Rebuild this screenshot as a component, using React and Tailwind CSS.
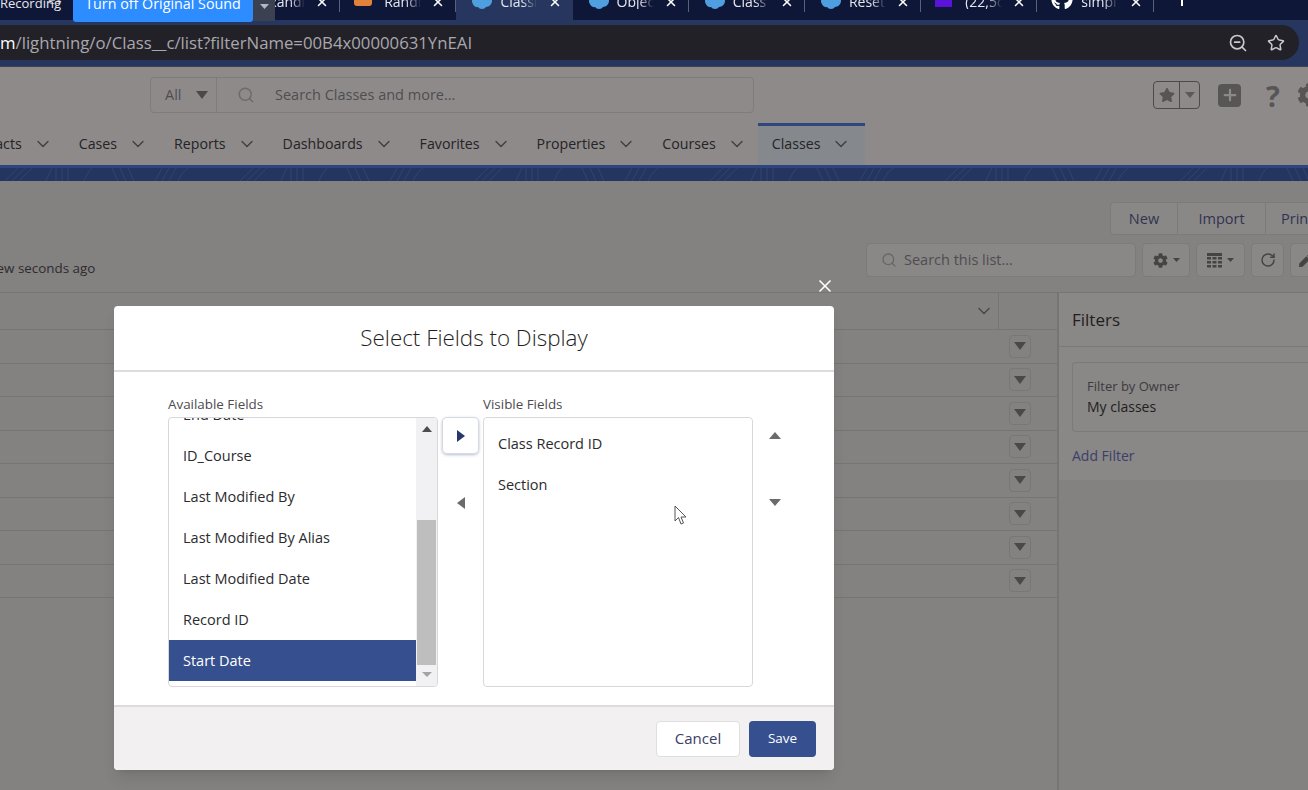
import React from "react";
import { X, Search, ZoomOut, Star, ChevronDown, Plus, RotateCw } from "lucide-react";
import { FaGithub, FaCog, FaPen, FaStar } from "react-icons/fa";

function Tri({ dir = "down", w = 12, h = 8, color = "#5b5959" }) {
  const pts = {
    down: `0,0 ${w},0 ${w / 2},${h}`,
    up: `0,${h} ${w},${h} ${w / 2},0`,
    right: `0,0 ${w},${h / 2} 0,${h}`,
    left: `${w},0 ${w},${h} 0,${h / 2}`,
  }[dir];
  return (
    <svg width={w} height={h} viewBox={`0 0 ${w} ${h}`} className="block shrink-0">
      <polygon points={pts} fill={color} />
    </svg>
  );
}

function Cloud() {
  return (
    <svg width="22" height="16" viewBox="0 0 22 16" className="block shrink-0">
      <path d="M2 8c0-3 2-5 5-5 1-2 3-3 5-3 2 0 4 1 5 3 3 0 5 2 5 5s-3 6-6 6c-1 1-2 2-4 2-2 0-3-1-4-2-3 1-6-3-6-6z" fill="#4f9fe0" />
    </svg>
  );
}

function Tab({ icon, label, active, sep = true }) {
  return (
    <div className={`relative w-[116.2px] h-[20px] shrink-0 flex items-center pl-[14px] ${active ? "bg-[#26365f]" : ""}`}>
      <div className="w-[27px] shrink-0 flex justify-start -mt-[18px]">{icon}</div>
      <span className="ml-[3px] w-[37px] overflow-hidden whitespace-nowrap text-[14px] leading-none text-[#e6e8ef] -mt-[16px] [mask-image:linear-gradient(to_right,black_60%,transparent)]">{label}</span>
      <X size={14} strokeWidth={2.6} className="absolute right-[11px] top-[-5px] text-white" />
      {sep && !active && <div className="absolute right-0 top-0 w-px h-[12px] bg-[#5b6178]" />}
    </div>
  );
}

function NavItem({ label, gap = 26 }) {
  return (
    <div className="flex items-center h-[42px] shrink-0" style={{ marginRight: gap }}>
      <span className="text-[14.2px] text-[#242326]">{label}</span>
      <ChevronDown size={20} strokeWidth={1.6} className="ml-[11px] text-[#3f3e42]" />
    </div>
  );
}

function RowBtn() {
  return (
    <div className="h-[33.5px] border-b border-[#777474] flex items-center justify-end pr-[26px]">
      <div className="w-[22px] h-[23px] border border-[#797676] rounded-[4px] flex items-center justify-center">
        <Tri w={12} h={8} color="#4a4848" />
      </div>
    </div>
  );
}

function ToolBtn({ className = "", children }) {
  return <div className={`h-[34px] border border-[#7d7a7a] rounded-[4px] bg-[#8a8787] flex items-center justify-center ${className}`}>{children}</div>;
}

function ListRow({ children, selected }) {
  return (
    <div className={`h-[41px] shrink-0 flex items-center pl-[14px] text-[14.5px] ${selected ? "bg-[#364f8f] text-white" : "text-[#2b2b2e]"}`}>{children}</div>
  );
}

export default function App() {
  return (
    <div className="relative w-[1308px] h-[790px] overflow-hidden bg-[#848181] [font-family:'Open_Sans',sans-serif]">
      {/* browser tab strip */}
      <div className="relative h-[20px] bg-[#0f1738] flex pl-[224px]">
        <Tab label="Randr" icon={null} />
        <Tab label="Randr" icon={<div className="w-[18px] h-[16px] rounded-b-[3px] bg-[#e0823a] -mt-[6px]" />} />
        <Tab label="Classr" active icon={<Cloud />} />
        <Tab label="Objec" icon={<Cloud />} />
        <Tab label="Class" icon={<Cloud />} />
        <Tab label="Reset" icon={<Cloud />} />
        <Tab label="(22,5c" icon={<div className="w-[17px] h-[14px] bg-[#5a14d8] -mt-[2px]" />} />
        <Tab label="simpl" icon={<FaGithub size={22} className="text-white -mt-[4px]" />} />
        <div className="ml-[27px] w-[2px] h-[6px] bg-white" />
      </div>

      {/* address bar */}
      <div className="h-[46px] bg-[#26365f] pt-[5px] pb-[5px] pr-[9px]">
        <div className="h-[35px] bg-[#232128] rounded-r-[18px] flex items-center justify-between pr-[14px]">
          <div className="text-[16.75px] text-[#a9a8ad] whitespace-nowrap"><span className="text-white">m</span>/lightning/o/Class__c/list?filterName=00B4x00000631YnEAI</div>
          <div className="flex items-center gap-[19px] text-[#c9c9cc]">
            <ZoomOut size={20} strokeWidth={2} />
            <Star size={18} strokeWidth={2} />
          </div>
        </div>
      </div>
      <div className="h-px bg-[#40424f]" />

      {/* salesforce header */}
      <div className="h-[56px] bg-[#8e8a8a] flex items-center pl-[150px]">
        <div className="w-[604px] shrink-0 h-[36px] border border-[#7f7c7c] rounded-[4px] flex items-center text-[14.5px] text-[#4f4d50]">
          <div className="w-[66px] h-full border-r border-[#7f7c7c] flex items-center pl-[14px]">
            All
            <span className="ml-[14px]"><Tri w={12} h={8} color="#4a4848" /></span>
          </div>
          <Search size={18} strokeWidth={2} className="ml-[20px] text-[#6d6b6d]" />
          <span className="ml-[20px]">Search Classes and more...</span>
        </div>
        <div className="ml-[399px] w-[47px] shrink-0 h-[28px] border border-[#4c4a4c] rounded-[4px] flex items-center">
          <div className="w-[26px] h-full border-r border-[#4c4a4c] flex items-center justify-center">
            <FaStar size={16} className="text-[#565455]" />
          </div>
          <div className="flex-1 flex justify-center"><Tri w={10} h={6} color="#5b5959" /></div>
        </div>
        <div className="ml-[18px] w-[23px] h-[23px] shrink-0 rounded-[4px] bg-[#575556] flex items-center justify-center">
          <Plus size={18} strokeWidth={3} className="text-[#8e8a8a]" />
        </div>
        <span className="ml-[25px] w-[19px] shrink-0 text-[29px] font-bold leading-none text-[#575556]">?</span>
        <FaCog size={24} className="ml-[12px] shrink-0 text-[#575556]" />
      </div>

      {/* nav */}
      <div className="h-[42px] bg-[#8e8a8a] flex items-center -ml-[36px]">
        <NavItem label="Contacts" />
        <NavItem label="Cases" />
        <NavItem label="Reports" />
        <NavItem label="Dashboards" />
        <NavItem label="Favorites" />
        <NavItem label="Properties" />
        <NavItem label="Courses" gap={11} />
        <div className="h-[42px] w-[107px] shrink-0 bg-[#85898e] border-t-[3px] border-[#30467f] flex items-center pl-[14px] pb-[3px]">
          <span className="text-[14.2px] text-[#242326]">Classes</span>
          <ChevronDown size={20} strokeWidth={1.6} className="ml-[11px] text-[#3f3e42]" />
        </div>
      </div>

      {/* brand band */}
      <div className="h-[16px] bg-[#24365f] border-t-[3px] border-[#2e4480] overflow-hidden">
        <svg width="1308" height="13" className="block">
          <defs>
            <pattern id="band" width="235" height="13" patternUnits="userSpaceOnUse">
              <path d="M5 13L18 0M12 13L25 0M19 13L32 0M46 13C48 8 50 4 52 0M56 13V0M62 13V0M68 13V0M84 13C86 8 88 4 92 0M112 0L118 13M120 0L126 13M128 0L134 13M155 13L162 0M162 13L169 0M169 13L176 0M178 13C180 8 183 4 188 0" stroke="#31426d" strokeWidth="1" fill="none" />
            </pattern>
          </defs>
          <rect width="1308" height="13" fill="url(#band)" />
        </svg>
      </div>

      {/* list view toolbar */}
      <div className="h-[111px] bg-[#848181] relative">
        <div className="flex justify-end pt-[21px]">
          <div className="h-[33px] flex border border-[#7d7a7a] rounded-l-[4px] bg-[#8a8787] text-[14.5px] text-[#2f3450] -mr-px">
            <div className="w-[67px] flex items-center justify-center border-r border-[#7d7a7a]">New</div>
            <div className="w-[88px] flex items-center justify-center border-r border-[#7d7a7a]">Import</div>
            <div className="w-[42px] pl-[15px] flex items-center overflow-hidden">Prin</div>
          </div>
        </div>
        <div className="flex items-end justify-between mt-[8px] h-[34px]">
          <div className="text-[13.4px] text-[#2d2c2f] whitespace-nowrap -ml-[8px] leading-[16px] pb-px">few seconds ago</div>
          <div className="flex gap-[6px] -mr-[10px]">
            <ToolBtn className="w-[270px] !justify-start pl-[14px] text-[14.5px] text-[#4f4d50]">
              <Search size={16} strokeWidth={2} className="text-[#686668]" />
              <span className="ml-[7px]">Search this list...</span>
            </ToolBtn>
            <ToolBtn className="w-[48px] gap-[5px]"><FaCog size={15} className="text-[#454344]" /><Tri w={7} h={4} color="#454344" /></ToolBtn>
            <ToolBtn className="w-[49px] gap-[5px]">
              <svg width="15" height="15" viewBox="0 0 15 15" className="block">
                <path d="M0 0h15v3H0zM0 4h4v2.5H0zM5.5 4h4v2.5h-4zM11 4h4v2.5h-4zM0 8h4v2.5H0zM5.5 8h4v2.5h-4zM11 8h4v2.5h-4zM0 12h4v2.5H0zM5.5 12h4v2.5h-4zM11 12h4v2.5h-4z" fill="#454344" />
              </svg>
              <Tri w={7} h={4} color="#454344" />
            </ToolBtn>
            <ToolBtn className="w-[33px]"><RotateCw size={16} strokeWidth={2.2} className="text-[#454344]" /></ToolBtn>
            <ToolBtn className="w-[28px] !justify-start pl-[8px]"><FaPen size={13} className="text-[#454344]" /></ToolBtn>
          </div>
        </div>
      </div>

      {/* table + filters */}
      <div className="flex h-[498px] border-t border-[#777474]">
        <div className="w-[1059px] shrink-0 border-r-2 border-[#777474]">
          <div className="h-[37px] flex justify-end border-b border-[#777474]">
            <div className="flex items-center pr-[4px]"><ChevronDown size={20} strokeWidth={1.8} className="text-[#4a4848]" /></div>
            <div className="w-[59px] border-l border-[#777474]" />
          </div>
          <RowBtn /><RowBtn /><RowBtn /><RowBtn /><RowBtn /><RowBtn /><RowBtn /><RowBtn />
        </div>
        <div className="flex-1">
          <div className="h-[187px] bg-[#8a8787]">
            <div className="h-[54px] border-b border-[#7d7a7a] flex items-center pl-[13px] text-[17px] text-[#1f1e21]">Filters</div>
            <div className="pl-[13px] pt-[15px]">
              <div className="h-[70px] border border-[#7d7a7a] rounded-l-[4px] border-r-0 pl-[14px] pt-[15px]">
                <div className="text-[13px] leading-[17px] text-[#3c3b3e]">Filter by Owner</div>
                <div className="mt-[2px] text-[14px] leading-[20px] text-[#1f1e21]">My classes</div>
              </div>
              <div className="mt-[13px] text-[14px] text-[#3a4068]">Add Filter</div>
            </div>
          </div>
        </div>
      </div>

      {/* modal */}
      <div className="absolute left-[815px] top-[276px] text-white"><X size={20} strokeWidth={2} /></div>
      <div className="absolute left-[114px] top-[306px] w-[720px] h-[464px] bg-white rounded-[4px] flex flex-col overflow-hidden shadow-lg">
        <div className="h-[66px] shrink-0 border-b-2 border-[#dddbdb] flex items-center justify-center text-[22.4px] font-light text-[#1f1e21]">Select Fields to Display</div>
        <div className="flex-1 flex pl-[54px] pt-[24px]">
          <div className="w-[270px]">
            <div className="h-[21px] text-[13.4px] leading-[17px] text-[#4c4b4e]">Available Fields</div>
            <div className="h-[270px] w-[270px] border border-[#d9d7d9] rounded-[4px] flex overflow-hidden">
              <div className="w-[247px] flex flex-col justify-end overflow-hidden">
                <ListRow>End Date</ListRow>
                <ListRow>ID_Course</ListRow>
                <ListRow>Last Modified By</ListRow>
                <ListRow>Last Modified By Alias</ListRow>
                <ListRow>Last Modified Date</ListRow>
                <ListRow>Record ID</ListRow>
                <ListRow selected>Start Date</ListRow>
                <div className="h-[5px] shrink-0" />
              </div>
              <div className="flex-1 bg-[#f1f0f2] flex flex-col items-center">
                <div className="h-[102px] w-full pt-[8px] flex justify-center"><Tri dir="up" w={10} h={6} color="#4d4d50" /></div>
                <div className="h-[145px] w-[19px] bg-[#bebebe]" />
                <div className="pt-[7px]"><Tri w={10} h={5} color="#a3a3a6" /></div>
              </div>
            </div>
          </div>
          <div className="w-[45px] pt-[21px] pl-[4px]">
            <div className="w-[37px] h-[37px] border border-[#d5d9e4] rounded-[5px] shadow-[0_1px_3px_rgba(50,70,120,0.35)] flex items-center justify-center">
              <Tri dir="right" w={8} h={12} color="#26386b" />
            </div>
            <div className="mt-[43px] ml-[15px]"><Tri dir="left" w={8} h={12} color="#6b6a6c" /></div>
          </div>
          <div className="w-[270px]">
            <div className="h-[21px] text-[13.4px] leading-[17px] text-[#4c4b4e]">Visible Fields</div>
            <div className="h-[270px] border border-[#d9d7d9] rounded-[4px] pt-[5px] text-[#2b2b2e]">
              <ListRow>Class Record ID</ListRow>
              <ListRow>Section</ListRow>
            </div>
          </div>
          <div className="pl-[16px] pt-[36px]">
            <Tri dir="up" w={12} h={7} color="#6b6a6c" />
            <div className="mt-[60px]"><Tri w={12} h={7} color="#6b6a6c" /></div>
          </div>
        </div>
        <div className="h-[65px] shrink-0 bg-[#f3f0f2] border-t-2 border-[#dddbdb] flex items-center justify-end gap-[9px] pr-[18px]">
          <div className="w-[84px] h-[36px] bg-white border border-[#e0dee0] rounded-[4px] flex items-center justify-center text-[15px] text-[#3a4068]">Cancel</div>
          <div className="w-[67px] h-[36px] bg-[#364f8f] rounded-[4px] flex items-center justify-center text-[13.5px] text-white">Save</div>
        </div>
      </div>

      {/* mouse pointer */}
      <svg width="14" height="22" viewBox="0 0 14 22" className="absolute left-[674px] top-[505px]">
        <path d="M1 1v15l3.5-3.5L7 19l2.5-1-2.5-6h5z" fill="#fff" stroke="#555" strokeWidth="1" />
      </svg>

      {/* zoom recording overlay */}
      <div className="absolute left-[48px] top-[-9px] text-[13px] text-[#aeb0bd] whitespace-nowrap leading-[16px]">es</div>
      <div className="absolute left-0 top-[-5px] text-[13px] text-[#e8e8ea] whitespace-nowrap leading-[16px]">Recording</div>
      <div className="absolute left-[73px] top-0 w-[180px] h-[22px] bg-[#2d8cff] rounded-b-[3px] flex items-center justify-center text-[14.3px] text-white overflow-hidden"><span className="-mt-[14px]">Turn off Original Sound</span></div>
      <div className="absolute left-[253px] top-0 w-[22px] h-[21px] bg-[#3c4151] flex justify-center pt-[4px]"><Tri w={9} h={5} color="#b5b7c0" /></div>
    </div>
  );
}
